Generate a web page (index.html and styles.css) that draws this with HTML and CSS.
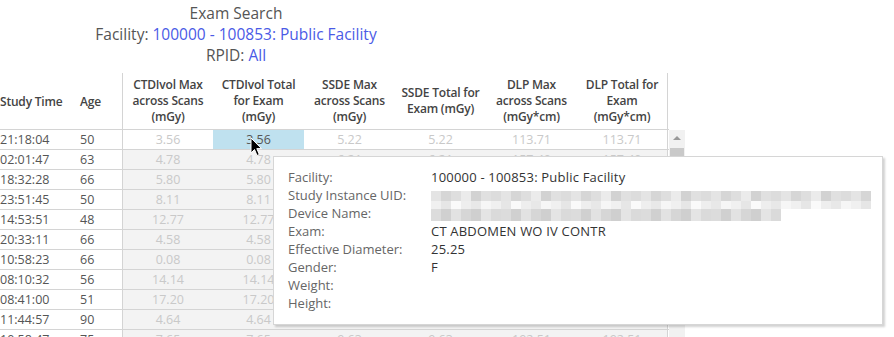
FILE: index.html
```html
<!DOCTYPE html>
<html>
<head>
<meta charset="utf-8">
<link rel="stylesheet" href="styles.css">
</head>
<body>
<div class="title">
  <div class="t1">Exam Search</div>
  <div>Facility: <span class="blue">100000 - 100853: Public Facility</span></div>
  <div>RPID: <span class="blue">All</span></div>
</div>
<div class="view">
  <div class="table">
    <div class="hrow">
      <div class="hc left">Study Time</div>
      <div class="hc left age">Age</div>
      <div class="hc sep">CTDIvol Max<br>across Scans<br>(mGy)</div>
      <div class="hc">CTDIvol Total<br>for Exam<br>(mGy)</div>
      <div class="hc">SSDE Max<br>across Scans<br>(mGy)</div>
      <div class="hc">SSDE Total for<br>Exam (mGy)</div>
      <div class="hc">DLP Max<br>across Scans<br>(mGy*cm)</div>
      <div class="hc last">DLP Total for<br>Exam<br>(mGy*cm)</div>
    </div>
    <div class="row first">
      <div class="c time">21:18:04</div><div class="c age">50</div>
      <div class="c v sep">3.56</div><div class="c v sel">3.56</div><div class="c v">5.22</div><div class="c v">5.22</div><div class="c v">113.71</div><div class="c v last">113.71</div>
    </div>
    <div class="row">
      <div class="c time">02:01:47</div><div class="c age">63</div>
      <div class="c v sep">4.78</div><div class="c v">4.78</div><div class="c v">6.21</div><div class="c v">6.21</div><div class="c v">157.40</div><div class="c v last">157.40</div>
    </div>
    <div class="row">
      <div class="c time">18:32:28</div><div class="c age">66</div>
      <div class="c v sep">5.80</div><div class="c v">5.80</div><div class="c v">7.10</div><div class="c v">7.10</div><div class="c v">201.33</div><div class="c v last">201.33</div>
    </div>
    <div class="row">
      <div class="c time">23:51:45</div><div class="c age">50</div>
      <div class="c v sep">8.11</div><div class="c v">8.11</div><div class="c v">9.87</div><div class="c v">9.87</div><div class="c v">298.20</div><div class="c v last">298.20</div>
    </div>
    <div class="row">
      <div class="c time">14:53:51</div><div class="c age">48</div>
      <div class="c v sep">12.77</div><div class="c v">12.77</div><div class="c v">14.02</div><div class="c v">14.02</div><div class="c v">480.15</div><div class="c v last">480.15</div>
    </div>
    <div class="row">
      <div class="c time">20:33:11</div><div class="c age">66</div>
      <div class="c v sep">4.58</div><div class="c v">4.58</div><div class="c v">5.90</div><div class="c v">5.90</div><div class="c v">150.22</div><div class="c v last">150.22</div>
    </div>
    <div class="row">
      <div class="c time">10:58:23</div><div class="c age">66</div>
      <div class="c v sep">0.08</div><div class="c v">0.08</div><div class="c v">0.11</div><div class="c v">0.11</div><div class="c v">2.40</div><div class="c v last">2.40</div>
    </div>
    <div class="row">
      <div class="c time">08:10:32</div><div class="c age">56</div>
      <div class="c v sep">14.14</div><div class="c v">14.14</div><div class="c v">16.30</div><div class="c v">16.30</div><div class="c v">512.08</div><div class="c v last">512.08</div>
    </div>
    <div class="row">
      <div class="c time">08:41:00</div><div class="c age">51</div>
      <div class="c v sep">17.20</div><div class="c v">17.20</div><div class="c v">19.44</div><div class="c v">19.44</div><div class="c v">640.91</div><div class="c v last">640.91</div>
    </div>
    <div class="row">
      <div class="c time">11:44:57</div><div class="c age">90</div>
      <div class="c v sep">4.64</div><div class="c v">4.64</div><div class="c v">5.63</div><div class="c v">5.63</div><div class="c v">160.85</div><div class="c v last">160.85</div>
    </div>
    <div class="row">
      <div class="c time">10:58:47</div><div class="c age">75</div>
      <div class="c v sep">7.65</div><div class="c v">7.65</div><div class="c v">9.63</div><div class="c v">9.63</div><div class="c v">192.51</div><div class="c v last">192.51</div>
    </div>
  </div>
  <div class="scroll">
    <div class="arrow"></div>
    <div class="thumb"></div>
  </div>
</div>

<svg class="cursor" width="13" height="20" viewBox="0 0 13 20">
  <path d="M1 1 L1 16 L4.5 12.5 L7 18.5 L9.3 17.5 L6.8 11.6 L11.5 11.6 Z" fill="#000" stroke="#fff" stroke-width="1"/>
</svg>

<div class="tooltip">
  <div class="tl">Facility:</div><div class="tv">100000 - 100853: Public Facility</div>
  <div class="tl">Study Instance UID:</div>
  <div class="tv blur">
    <div class="px uid1"></div>
    <div class="px uid2"></div>
  </div>
  <div class="tl">Device Name:</div>
  <div class="tv blur"><div class="px dev"></div></div>
  <div class="tl">Exam:</div><div class="tv">CT ABDOMEN WO IV CONTR</div>
  <div class="tl">Effective Diameter:</div><div class="tv">25.25</div>
  <div class="tl">Gender:</div><div class="tv">F</div>
  <div class="tl">Weight:</div><div class="tv"></div>
  <div class="tl">Height:</div><div class="tv"></div>
</div>
</body>
</html>
```

FILE: styles.css
```css
html, body {
  margin: 0;
  padding: 0;
  background: #fff;
  overflow: hidden;
  height: 337px;
  font-family: "Open Sans", "Liberation Sans", sans-serif;
}
.title {
  width: 472px;
  padding-top: 3px;
  text-align: center;
  font-size: 15.5px;
  line-height: 21px;
  color: #555;
}
.blue { color: #4a5ae6; }
.view {
  display: flex;
  margin-top: 7px;
}
.table {
  width: 669px;
}
.hrow, .row {
  display: grid;
  grid-template-columns: 80px 42px repeat(6, 91px) 1px;
}
.hrow {
  height: 56px;
  border-bottom: 1px solid #d4d4d4;
}
.hc {
  display: flex;
  align-items: center;
  justify-content: center;
  text-align: center;
  font-size: 12px;
  line-height: 16px;
  font-weight: 600;
  color: #444;
  letter-spacing: -0.2px;
}
.hc.left { justify-content: flex-start; padding-top: 2px; }
.sep { border-left: 1px solid #d4d4d4; }
.last { border-right: 1px solid #d4d4d4; }
.row {
  height: 19px;
  border-bottom: 1px solid #d4d4d4;
}
.c {
  font-size: 12.5px;
  line-height: 19px;
  color: #555;
  white-space: nowrap;
}
.c.v {
  text-align: center;
  color: #c9c9c9;
  background: #f3f3f3;
}
.row.first .c.v { background: #fff; }
.row.first .c.v.sel { background: #bfe1ef; color: #555; }
.scroll {
  width: 16px;
  margin-top: 57px;
  background: #f1f1f1;
  height: 260px;
  display: flex;
  flex-direction: column;
  align-items: center;
}
.arrow {
  margin-top: 6px;
  width: 0;
  height: 0;
  border-left: 4px solid transparent;
  border-right: 4px solid transparent;
  border-bottom: 4px solid #999;
}
.thumb {
  margin-top: 8px;
  width: 14px;
  height: 150px;
  background: #c9c9c9;
}
.cursor {
  position: absolute;
  left: 250px;
  top: 137px;
}
.tooltip {
  position: absolute;
  left: 273px;
  top: 156px;
  width: 578px;
  height: 148px;
  padding: 11px 16px 8px 14px;
  background: #fff;
  border: 1px solid #d6d6d6;
  box-shadow: 2px 2px 2px rgba(0,0,0,0.18);
  display: grid;
  grid-template-columns: 143px 1fr;
  grid-auto-rows: 18px;
  font-size: 13px;
  line-height: 18px;
  color: #333;
}
.tl { color: #666; }
.tv { color: #333; letter-spacing: 0.2px; }
.blur { position: relative; }
.px {
  position: absolute;
  left: 0;
  height: 10px;
}
.uid1 {
  top: 5px;
  width: 440px;
  background: repeating-linear-gradient(90deg, #e4e4e4 0 10px, #d6d6d6 10px 20px, #dedede 20px 30px, #ebebeb 30px 40px, #d2d2d2 40px 50px, #e0e0e0 50px 60px, #dcdcdc 60px 70px);
}
.uid2 {
  top: 15px;
  width: 440px;
  height: 8px;
  background: repeating-linear-gradient(90deg, #f0f0f0 0 10px, #e6e6e6 10px 20px, #fafafa 20px 30px, #eeeeee 30px 40px, #e8e8e8 40px 50px, #f6f6f6 50px 60px);
}
.dev {
  top: 5px;
  width: 350px;
  height: 12px;
  background: repeating-linear-gradient(90deg, #dcdcdc 0 10px, #d0d0d0 10px 20px, #e2e2e2 20px 30px, #d6d6d6 30px 40px, #cfcfcf 40px 50px, #e4e4e4 50px 60px, #dadada 60px 70px);
}
```
